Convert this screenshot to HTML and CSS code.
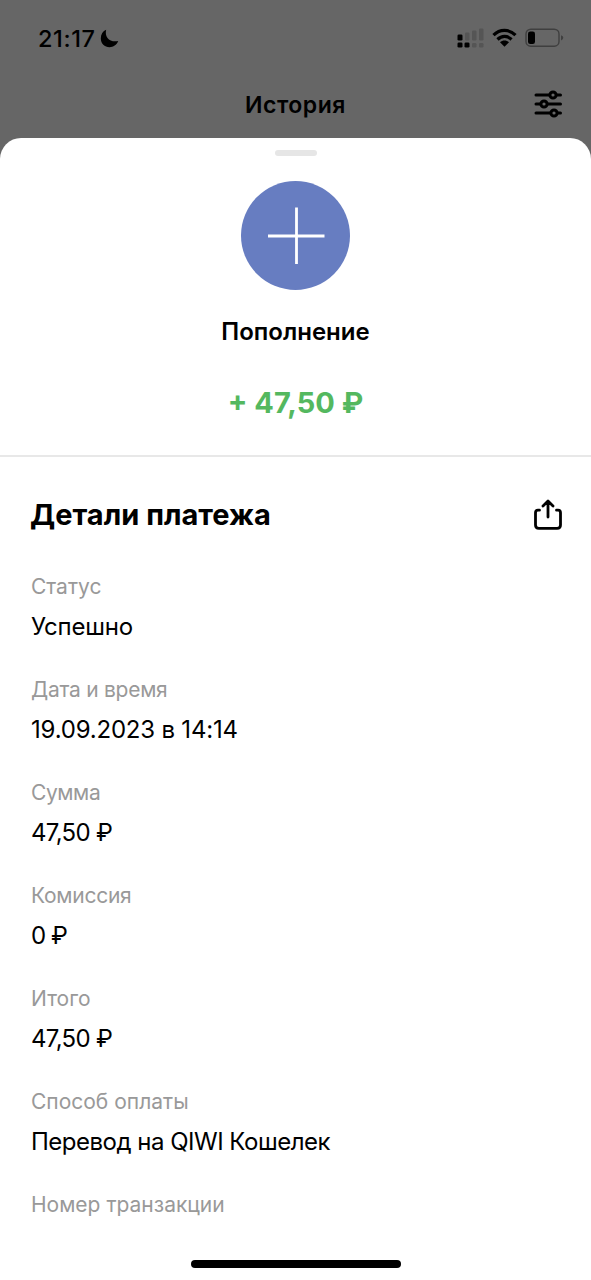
FILE: index.html
```
<!DOCTYPE html>
<html lang="ru">
<head>
<meta charset="utf-8">
<title>История</title>
<link rel="stylesheet" href="styles.css">
</head>
<body>
<div class="screen">
  <header class="status-bar">
    <div class="clock">
      <span class="time">21:17</span>
      <svg class="moon" width="19" height="19" viewBox="0 0 19 19"><path d="M6.2.7C4.3 7.800 9.500 13.700 18.200 12.100C16.600 16.100 13.300 18.200 9.600 18.200C4.600 18.200.8 14.300.8 9.400C.8 5.300 2.800 2.100 6.200.7Z"/></svg>
    </div>
    <div class="indicators">
      <svg width="27" height="21" viewBox="0 0 27 21">
        <g fill="#000"><rect x="0.500" y="6.500" width="5" height="6" rx="1.300"/><rect x="0.500" y="14.500" width="5" height="5" rx="1.300"/><rect x="7.500" y="14.500" width="5" height="5" rx="1.300"/></g>
        <g fill="#555"><rect x="8" y="4.500" width="4.500" height="8" rx="1.300"/><rect x="15" y="2.500" width="4.500" height="10" rx="1.300"/><rect x="22" y="0.500" width="4.500" height="12" rx="1.300"/><rect x="15" y="15" width="4.500" height="4.500" rx="1.300"/><rect x="22" y="15" width="4.500" height="4.500" rx="1.300"/></g>
      </svg>
      <svg class="wifi" width="25" height="20" viewBox="0 0 25 20">
        <g fill="none" stroke="#000" stroke-width="3.200"><path d="M1.500 7.200C7.800.8 17.200.8 23.500 7.200"/><path d="M5.500 11.500C9.600 7.400 15.400 7.400 19.500 11.500"/></g>
        <path d="M8 14.200C10.500 11.800 14.500 11.800 17 14.200L12.500 18.800Z"/>
      </svg>
      <svg class="battery" width="39" height="20" viewBox="0 0 39 20">
        <rect x="1" y="1.200" width="33" height="17" rx="4.800" fill="none" stroke="#3f3f3f" stroke-width="1.400"/>
        <rect x="3" y="3.500" width="7" height="12.500" rx="2.300"/>
        <path d="M36 7.200Q38.300 8 38.300 9.800T36 12.400Z" fill="#404040"/>
      </svg>
    </div>
  </header>
  <div class="nav-bar">
    <h1 class="nav-title">История</h1>
    <svg class="filters" width="29" height="28" viewBox="0 0 29 28">
      <g fill="none" stroke="#000" stroke-width="3" stroke-linecap="round">
        <path d="M2 5H15M23 5H26.500M2 14H6M14 14H26.500M2 23H16M24 23H26.500"/>
        <circle cx="19" cy="5" r="3.100"/><circle cx="10" cy="14" r="3.100"/><circle cx="20" cy="23" r="3.100"/>
      </g>
    </svg>
  </div>
  <main class="sheet">
    <div class="grabber"></div>
    <section class="summary">
      <svg class="badge" width="110" height="110" viewBox="0 0 110 110">
        <circle cx="54.500" cy="55.500" r="54.500" fill="#677dc1"/>
        <path d="M27 56H83.500M55.500 27.500V84" stroke="#fff" stroke-width="2.800"/>
      </svg>
      <h2 class="operation">Пополнение</h2>
      <p class="amount">+ 47,50 ₽</p>
    </section>
    <section class="details">
      <div class="details-head">
        <h2 class="details-title">Детали платежа</h2>
        <svg class="share" width="30" height="32" viewBox="0 0 30 32"><path d="M6.500 11.200H5Q2.500 11.200 2.500 13.700V26Q2.500 29.400 5.900 29.400H24.100Q27.500 29.400 27.500 26V13.700Q27.500 11.200 25 11.200H23.500"/><path d="M15 18V2.500M10 7L15 2.100L20 7"/></svg>
      </div>
      <dl class="fields">
        <div class="field"><dt>Статус</dt><dd>Успешно</dd></div>
        <div class="field date"><dt>Дата и время</dt><dd>19.09.2023 в 14:14</dd></div>
        <div class="field money"><dt>Сумма</dt><dd>47,50 ₽</dd></div>
        <div class="field fee"><dt>Комиссия</dt><dd>0 ₽</dd></div>
        <div class="field total"><dt>Итого</dt><dd>47,50 ₽</dd></div>
        <div class="field method"><dt>Способ оплаты</dt><dd>Перевод на QIWI Кошелек</dd></div>
        <div class="field"><dt>Номер транзакции</dt></div>
      </dl>
    </section>
    <div class="home-indicator"></div>
  </main>
</div>
</body>
</html>
```
FILE: styles.css
```
* { box-sizing: border-box; }
body, h1, h2, p, dl, dt, dd { margin: 0; }
body { background: #666; color: #000; font-family: Inter, "Liberation Sans", sans-serif; }
svg { display: block; flex: none; }
.screen { width: 591px; height: 1280px; display: flex; flex-direction: column; overflow: hidden; }
.status-bar { height: 76px; padding: 0 27px 0 38px; display: flex; align-items: center; justify-content: space-between; }
.clock { display: flex; align-items: center; gap: 4px; }
.time { font-size: 23.5px; font-weight: 500; line-height: 28px; letter-spacing: 0.6px; padding-top: 1px; }
.indicators { display: flex; align-items: center; }
.wifi { margin-left: 8px; }
.battery { margin-left: 8px; }
.nav-bar { height: 62px; padding: 0 28px; display: grid; grid-template-columns: 29px 1fr 29px; align-items: center; }
.nav-title { grid-column: 2; text-align: center; font-size: 23px; line-height: 28px; font-weight: 600; margin-bottom: 4px; letter-spacing: 0.5px; }
.filters { margin-bottom: 6px; }
.sheet { flex: 1; min-height: 0; display: flex; flex-direction: column; align-items: center; background: #fff; border-radius: 21px 21px 0 0; padding-top: 12px; }
.grabber { width: 42px; height: 6px; border-radius: 3px; background: #e6e6e6; }
.summary { width: 100%; height: 301px; padding-top: 24px; display: flex; flex-direction: column; align-items: center; border-bottom: 2px solid #e8e8e8; }
.operation { margin-top: 27px; font-size: 24px; line-height: 30px; font-weight: 600; }
.amount { margin-top: 37px; font-size: 29px; line-height: 38px; font-weight: 700; color: #54b85f; }
.details { width: 100%; flex: 1; padding: 39px 28px 0 31px; }
.details-head { display: flex; align-items: center; justify-content: space-between; height: 38px; }
.details-title { font-size: 29px; line-height: 38px; font-weight: 700; letter-spacing: 0; margin-left: -1px; }
.share { fill: none; stroke: #000; stroke-width: 2.8; stroke-linecap: round; stroke-linejoin: round; }
.fields { margin-top: 40px; display: flex; flex-direction: column; gap: 35px; }
.field { display: flex; flex-direction: column; gap: 12px; }
.field dt { font-size: 21px; line-height: 26px; color: #999; letter-spacing: 0; }
.field dd { font-size: 24px; line-height: 30px; letter-spacing: -0.2px; }
.date dt, .fee dt { letter-spacing: -0.26px; }
.money dt { letter-spacing: -0.4px; }
.money dd, .total dd { letter-spacing: -0.7px; }
.fee dd { letter-spacing: -1px; }
.method dd { letter-spacing: -0.5px; }
.home-indicator { width: 210px; height: 8px; border-radius: 4px; background: #000; margin-bottom: 12px; }
```
